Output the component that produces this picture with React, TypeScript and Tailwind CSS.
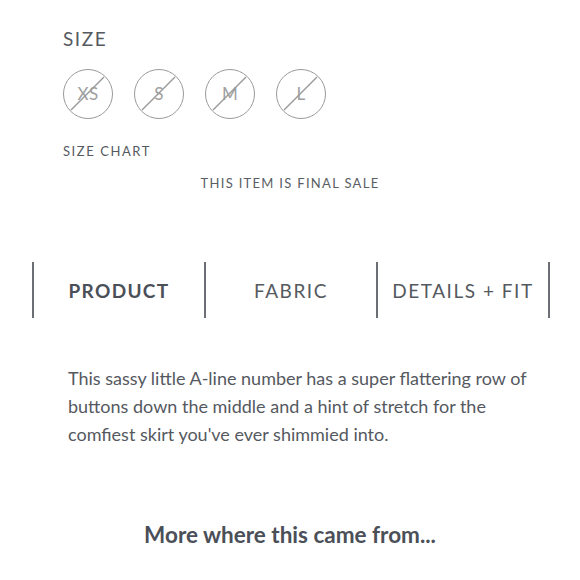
const SIZES = ['XS', 'S', 'M', 'L'];

const SizeCircle = ({ label }: { label: string }) => (
  <div className="relative w-[50px] h-[50px] rounded-full border-[1.5px] border-[#9a9a9a] flex items-center justify-center">
    <span className="text-[17px] text-[#a0a0a0] tracking-wide">{label}</span>
    <svg className="absolute inset-0" width="47" height="47" viewBox="0 0 47 47">
      <line x1="7" y1="40" x2="40" y2="7" stroke="#9a9a9a" strokeWidth="1.4" />
    </svg>
  </div>
);

const TABS = [
  { nom: 'PRODUCT', actif: true },
  { nom: 'FABRIC', actif: false },
  { nom: 'DETAILS + FIT', actif: false },
];

export default function App() {
  return (
    <div className="w-[580px] h-[580px] bg-white text-[#4b4f58] font-['Lato','Open_Sans',sans-serif] overflow-hidden">
      <div className="pl-[63px] pt-[28px]">
        <div className="text-[19px] tracking-[0.08em] leading-[22px] text-[#555a60]">SIZE</div>
        <div className="flex gap-[21px] mt-[19px]">
          {SIZES.map((s) => (
            <SizeCircle key={s} label={s} />
          ))}
        </div>
        <div className="mt-[24px] text-[13px] tracking-[0.12em] leading-[16px] text-[#555a60]">
          SIZE CHART
        </div>
      </div>
      <div className="mt-[16px] text-center text-[13px] tracking-[0.1em] leading-[16px] text-[#5a5e64]">
        THIS ITEM IS FINAL SALE
      </div>

      <div className="mx-[32px] mt-[71px] grid grid-cols-3 h-[56px] border-r-2 border-[#6b6e74] w-[518px]">
        {TABS.map((t) => (
          <div
            key={t.nom}
            className="border-l-2 border-[#6b6e74] flex items-center justify-center pt-[3px]"
          >
            <span
              className={
                t.actif
                  ? 'text-[19px] font-bold tracking-[0.07em] text-[#4b4f58]'
                  : 'text-[19px] tracking-[0.08em] text-[#555a60]'
              }
            >
              {t.nom}
            </span>
          </div>
        ))}
      </div>

      <p className="mt-[46px] pl-[68px] pr-[36px] text-[18px] leading-[28px] text-[#55595f]">
        This sassy little A-line number has a super flattering row of buttons down the
        middle and a hint of stretch for the comfiest skirt you've ever shimmied into.
      </p>

      <div className="mt-[70px] text-center text-[22.5px] font-bold text-[#4b4f58]">
        More where this came from...
      </div>
    </div>
  );
}
